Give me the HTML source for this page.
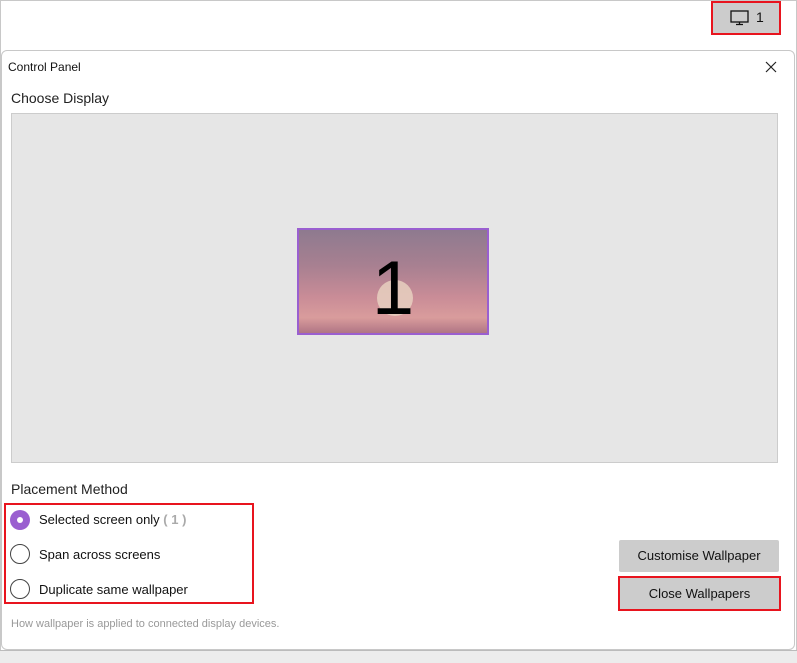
<!DOCTYPE html>
<html><head><style>
body{margin:0;width:797px;height:662px;background:#fff;font-family:"Liberation Sans",sans-serif;position:relative;overflow:hidden}
.abs{position:absolute}
</style></head><body>
<div class="abs" style="left:0;top:0;width:795px;height:660px;border:1px solid #c8c8c8;border-bottom:none"></div>
<div class="abs" style="left:0;top:650px;width:797px;height:12px;background:#ececec;border-top:1px solid #bbb"></div>
<div class="abs" style="left:711px;top:1px;width:70px;height:34px;background:#cccccc;border:2px solid #e8141e;box-sizing:border-box"></div>
<svg class="abs" style="left:730px;top:10px" width="20" height="16" viewBox="0 0 20 16"><rect x="1" y="1" width="17" height="11" fill="none" stroke="#111" stroke-width="1.3"/><path d="M9.5 12v2M6 14.5h7" stroke="#111" stroke-width="1.3"/></svg>
<div class="abs" style="left:756px;top:9px;font-size:14px;color:#111">1</div>
<div class="abs" style="left:1px;top:50px;width:792px;height:598px;border:1px solid #c8c8c8;border-radius:6px;background:#fff"></div>
<div class="abs" style="left:8px;top:60px;font-size:12px;color:#111">Control Panel</div>
<svg class="abs" style="left:765px;top:61px" width="12" height="12" viewBox="0 0 12 12"><path d="M1 1L11 11M11 1L1 11" stroke="#222" stroke-width="1.2"/></svg>
<div class="abs" style="left:11px;top:90px;font-size:14px;color:#222">Choose Display</div>
<div class="abs" style="left:11px;top:113px;width:767px;height:350px;background:#e6e6e6;border:1px solid #ccc;box-sizing:border-box"></div>
<div class="abs" style="left:297px;top:228px;width:192px;height:107px;box-sizing:border-box;border:2px solid #9a5fd0;background:linear-gradient(180deg,#8e7a8f 0%,#a88091 35%,#c98c97 65%,#d99c9c 85%,#b07585 100%);overflow:hidden">
<div class="abs" style="left:78px;top:50px;width:36px;height:36px;border-radius:50%;background:#e8d0bf;opacity:.85"></div>
<div class="abs" style="left:0;top:14px;width:188px;text-align:center;font-size:76px;line-height:90px;color:#000">1</div>
</div>
<div class="abs" style="left:11px;top:481px;font-size:14px;color:#222">Placement Method</div>
<div class="abs" style="left:4px;top:503px;width:250px;height:101px;border:2px solid #e8141e;box-sizing:border-box"></div>
<div class="abs" style="left:10px;top:510px;width:20px;height:20px;border-radius:50%;background:#9a5fd0"></div>
<div class="abs" style="left:17px;top:517px;width:6px;height:6px;border-radius:50%;background:#fff"></div>
<div class="abs" style="left:10px;top:544px;width:18px;height:18px;border-radius:50%;border:1px solid #444"></div>
<div class="abs" style="left:10px;top:579px;width:18px;height:18px;border-radius:50%;border:1px solid #444"></div>
<div class="abs" style="left:39px;top:512px;font-size:13px;color:#111">Selected screen only <span style="color:#aaa;font-weight:bold">( 1 )</span></div>
<div class="abs" style="left:39px;top:547px;font-size:13px;color:#111">Span across screens</div>
<div class="abs" style="left:39px;top:582px;font-size:13px;color:#111">Duplicate same wallpaper</div>
<div class="abs" style="left:11px;top:618px;font-size:11px;color:#999">How wallpaper is applied to connected display devices.</div>
<div class="abs" style="left:619px;top:540px;width:160px;height:32px;background:#cccccc;border-radius:2px;font-size:13px;color:#111;text-align:center;line-height:32px">Customise Wallpaper</div>
<div class="abs" style="left:618px;top:576px;width:163px;height:35px;background:#cccccc;border:2px solid #e8141e;box-sizing:border-box;font-size:13px;color:#111;text-align:center;line-height:31px">Close Wallpapers</div>
</body></html>
